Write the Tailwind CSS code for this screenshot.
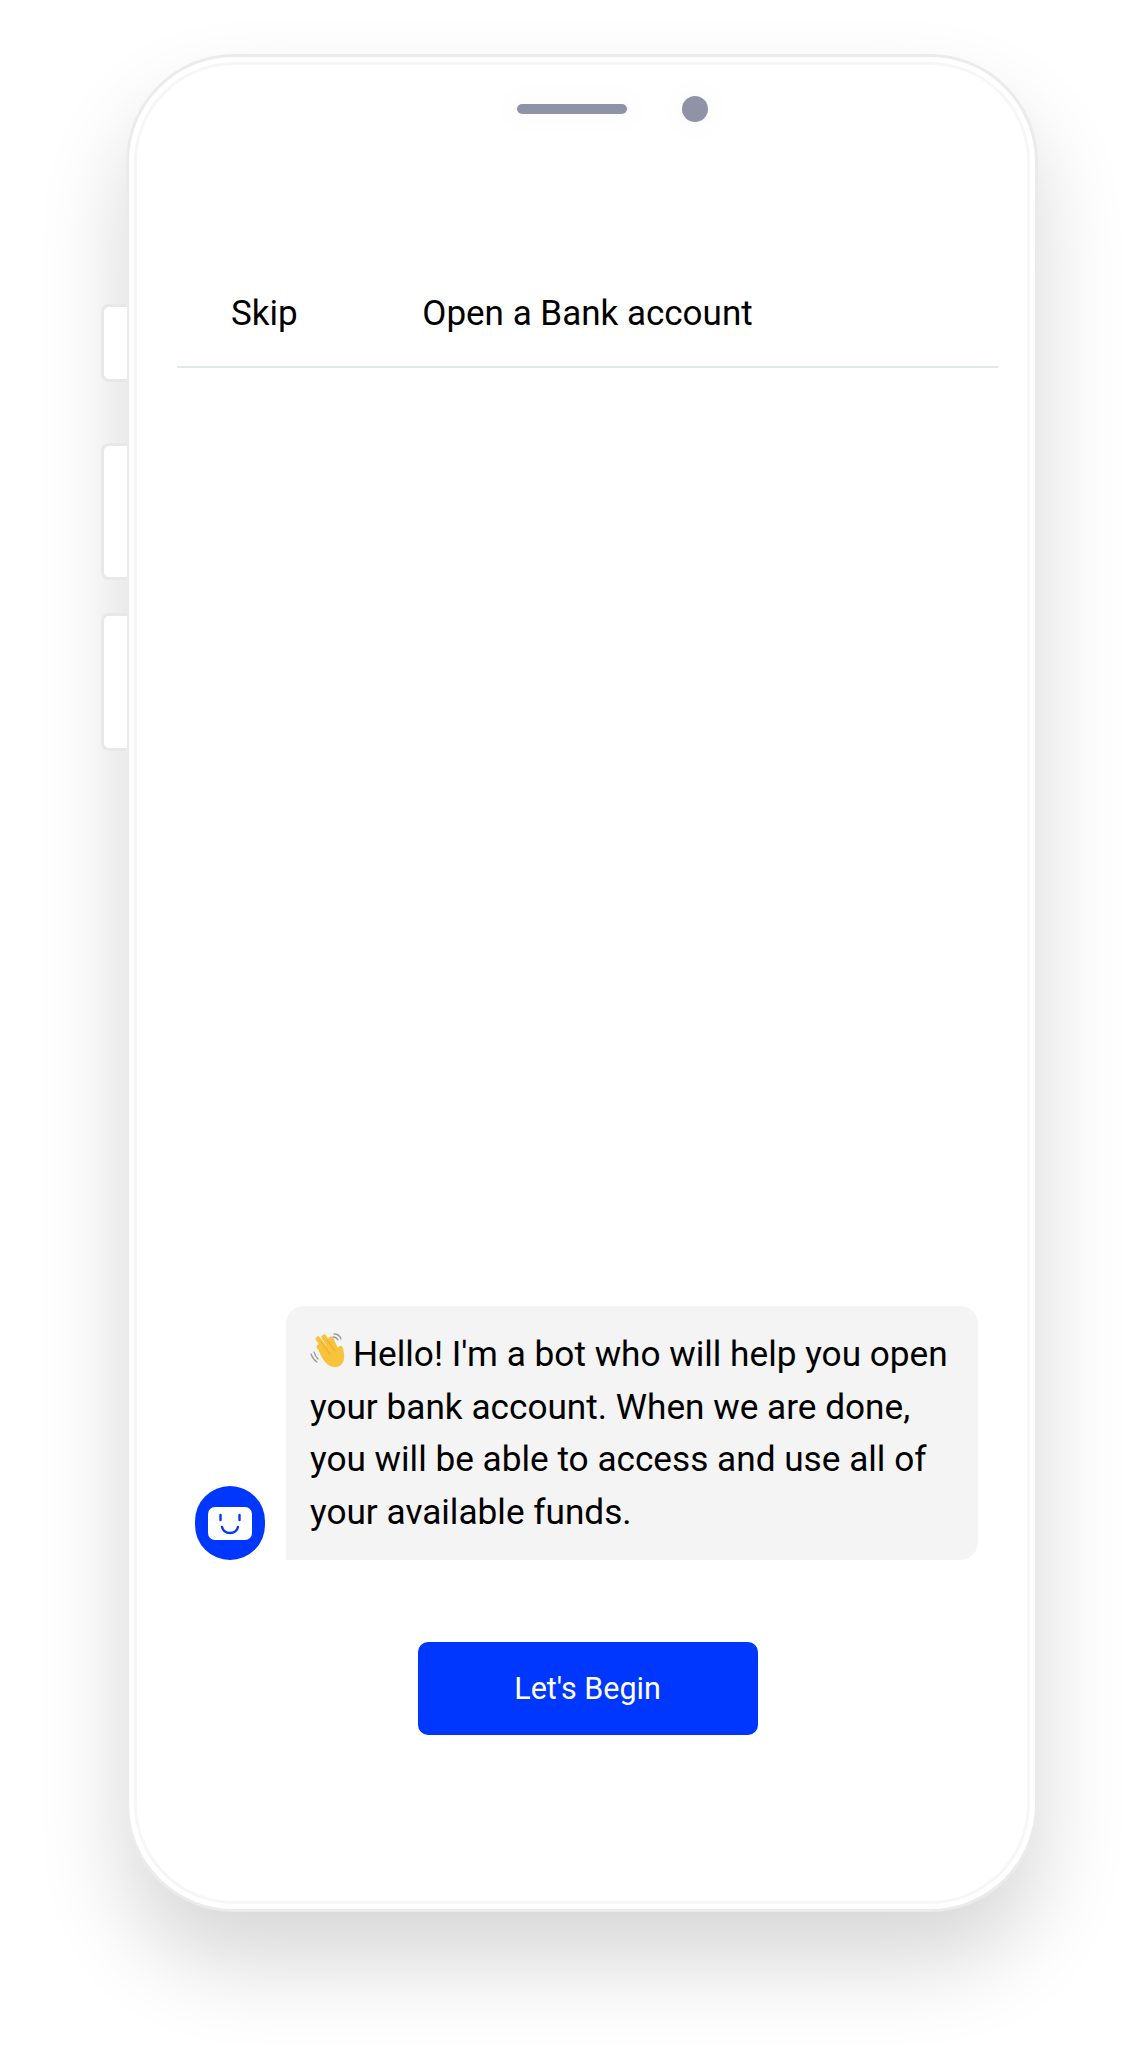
<!DOCTYPE html>
<html lang="en">
<head>
    <meta charset="UTF-8">
    <meta name="viewport" content="width=device-width, initial-scale=1.0">
    <title>Open a Bank account</title>
    <script src="https://cdn.jsdelivr.net/npm/@tailwindcss/browser@4"></script>
</head>
<body class="bg-white font-['Roboto',sans-serif] text-black">
    <div class="w-[1136px] h-[2062px] overflow-hidden pl-[126px] pt-[54px]">
        <!-- Phone -->
        <div class="relative w-[912px] h-[1858px] rounded-[108px] border-[3px] border-[#ebebeb] bg-white p-[5px] shadow-[0_50px_90px_rgba(0,0,0,0.16)]">
            <!-- Side buttons -->
            <div class="absolute left-[-28px] top-[247px] w-[26px] h-[78px] rounded-l-[8px] border-[3px] border-r-0 border-[#e8e8e8] bg-white"></div>
            <div class="absolute left-[-28px] top-[386px] w-[26px] h-[137px] rounded-l-[8px] border-[3px] border-r-0 border-[#e8e8e8] bg-white"></div>
            <div class="absolute left-[-28px] top-[556px] w-[26px] h-[138px] rounded-l-[8px] border-[3px] border-r-0 border-[#e8e8e8] bg-white"></div>

            <div class="flex flex-col h-full rounded-[100px] border-[3px] border-[#f6f6f6] bg-white pl-[40px]">
                <!-- Speaker and camera -->
                <div class="flex items-center justify-center gap-[55px] h-[74px] mt-[7px] ml-[20px]">
                    <div class="w-[110px] h-[10px] rounded-full bg-[#9092a8] shadow-[0_0_24px_14px_rgba(0,0,0,0.012)]"></div>
                    <div class="w-[26px] h-[26px] rounded-full bg-[#9092a8] shadow-[0_0_24px_14px_rgba(0,0,0,0.012)]"></div>
                </div>

                <!-- Header -->
                <div class="grid grid-cols-[1fr_auto_1fr] items-center w-[821px] h-[97px] mt-[125px] pb-[9px] border-b-2 border-[#e0e9f0] text-[35px] leading-[44px]">
                    <span class="pl-[54px]">Skip</span>
                    <span>Open a Bank account</span>
                </div>

                <!-- Chat -->
                <div class="flex-1 flex flex-col justify-end w-[821px]">
                    <div class="flex items-end">
                        <div class="flex items-center justify-center w-[70px] h-[74px] ml-[18px] rounded-full bg-[#0037ff]">
                            <svg width="44" height="33" viewBox="0 0 44 33" fill="none">
                                <rect width="44" height="33" rx="7" fill="#fff"/>
                                <path d="M12.5 8v5M31.5 8v5" stroke="#0037ff" stroke-width="2.4" stroke-linecap="round"/>
                                <path d="M14 20c2 8 14 8 16 0" stroke="#0037ff" stroke-width="2.4" stroke-linecap="round"/>
                            </svg>
                        </div>
                        <div class="ml-[21px] w-[692px] h-[254px] rounded-[18px] rounded-bl-none bg-[#f4f4f4] px-[24px] pt-[22px] text-[35.2px] leading-[52.6px]">
                            <svg class="inline-block align-[-3px] mr-[7px]" width="36" height="36" viewBox="0 0 36 36" fill="none">
                                <path d="M1 21c1 3 3 6 6 8M4 19c1 3 2 5 4 7M24 1c3 0 6 2 7 5M23 4c2 0 4 1 5 3" stroke="#9a9a9a" stroke-width="1.3" stroke-linecap="round"/>
                                <g stroke="#f8c33c" stroke-width="5" stroke-linecap="round">
                                    <path d="M9 14l9 11M8 6l12 15M14 4l10 15M21 6l6 13"/>
                                </g>
                                <path d="M9 18c3 8 8 16 16 16 8 0 10-8 9-13l-1-6c-1-3-4-3-5 0l-1 5-8-8z" fill="#f8c33c"/>
                                <path d="M11 9l9 12M17 7l8 11" stroke="#e8a22a" stroke-width="0.8" stroke-linecap="round"/>
                            </svg>Hello! I'm a bot who will help you open your bank account. When we are done, you will be able to access and use all of your available funds.
                        </div>
                    </div>
                    <div class="flex justify-center mt-[82px] mb-[166px]">
                        <button class="w-[340px] h-[93px] rounded-[10px] bg-[#0037ff] text-white text-[30.5px]">Let's Begin</button>
                    </div>
                </div>
            </div>
        </div>
    </div>
</body>
</html>
